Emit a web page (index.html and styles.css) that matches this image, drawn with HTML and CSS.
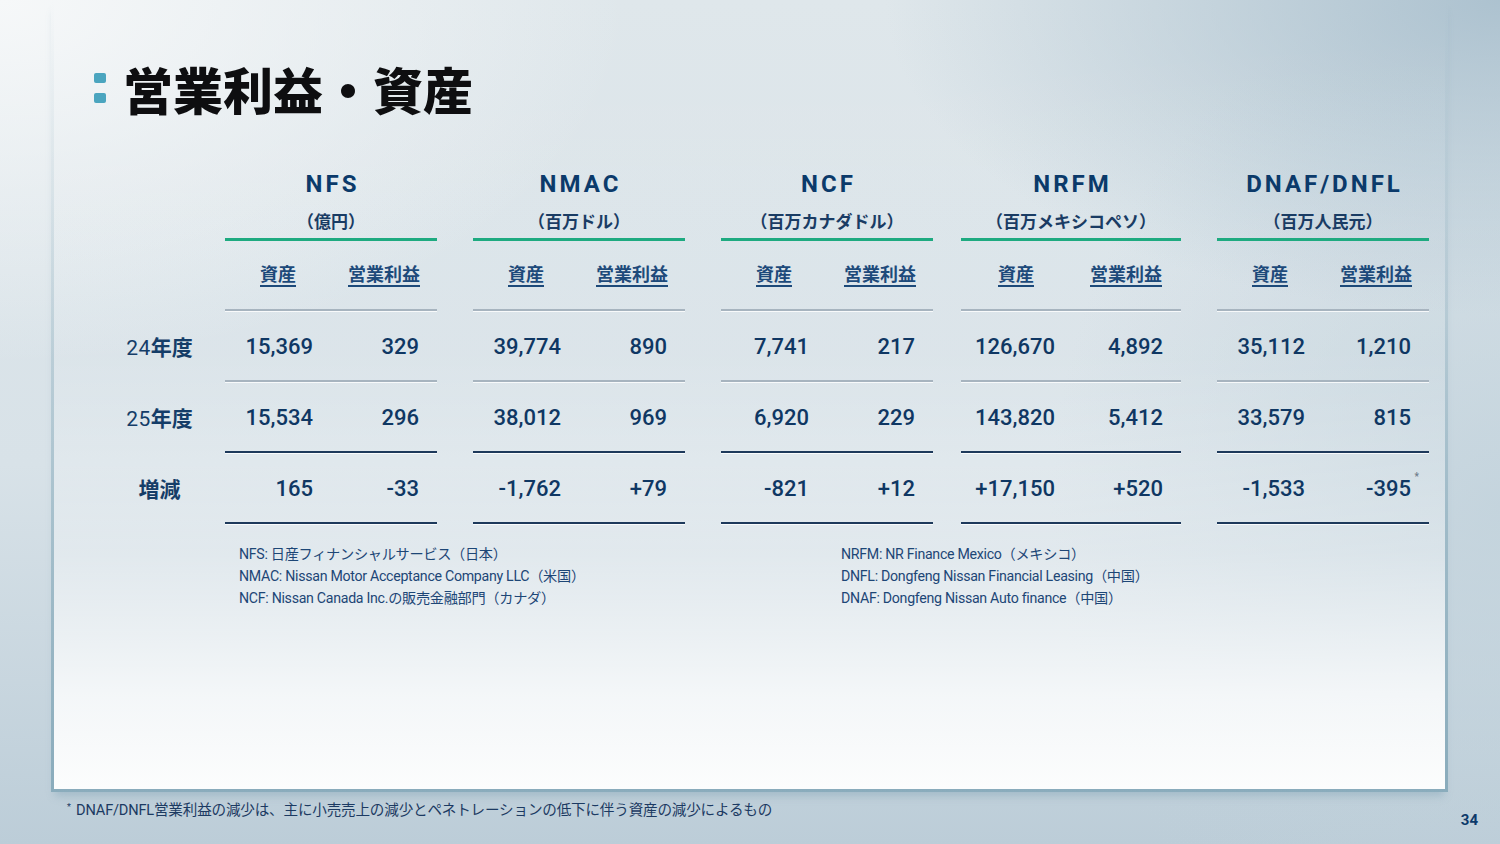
FILE: index.html
```html
<!DOCTYPE html>
<html lang="ja">
<head>
<meta charset="utf-8">
<title>営業利益・資産</title>
<link rel="stylesheet" href="styles.css">
</head>
<body>
<div class="slide">
  <div class="panel">
    <header class="title-row">
      <div class="bullets"><span></span><span></span></div>
      <h1>営業利益・資産</h1>
    </header>

    <div class="table">
      <div class="labels">
        <div class="c-name"></div>
        <div class="c-unit"></div>
        <div class="c-sub"></div>
        <div class="c-row light"><span class="lbl"><span class="d">24</span>年度</span></div>
        <div class="c-row dark"><span class="lbl"><span class="d">25</span>年度</span></div>
        <div class="c-row dark"><span class="lbl bold">増減</span></div>
      </div>

      <div class="group">
        <div class="c-name">NFS</div>
        <div class="c-unit">（億円）</div>
        <div class="c-sub"><span>資産</span><span>営業利益</span></div>
        <div class="c-row light"><span>15,369</span><span>329</span></div>
        <div class="c-row dark"><span>15,534</span><span>296</span></div>
        <div class="c-row dark"><span>165</span><span>-33</span></div>
      </div>

      <div class="group">
        <div class="c-name">NMAC</div>
        <div class="c-unit">（百万ドル）</div>
        <div class="c-sub"><span>資産</span><span>営業利益</span></div>
        <div class="c-row light"><span>39,774</span><span>890</span></div>
        <div class="c-row dark"><span>38,012</span><span>969</span></div>
        <div class="c-row dark"><span>-1,762</span><span>+79</span></div>
      </div>

      <div class="group">
        <div class="c-name">NCF</div>
        <div class="c-unit">（百万カナダドル）</div>
        <div class="c-sub"><span>資産</span><span>営業利益</span></div>
        <div class="c-row light"><span>7,741</span><span>217</span></div>
        <div class="c-row dark"><span>6,920</span><span>229</span></div>
        <div class="c-row dark"><span>-821</span><span>+12</span></div>
      </div>

      <div class="group wide">
        <div class="c-name">NRFM</div>
        <div class="c-unit">（百万メキシコペソ）</div>
        <div class="c-sub"><span>資産</span><span>営業利益</span></div>
        <div class="c-row light"><span>126,670</span><span>4,892</span></div>
        <div class="c-row dark"><span>143,820</span><span>5,412</span></div>
        <div class="c-row dark"><span>+17,150</span><span>+520</span></div>
      </div>

      <div class="group">
        <div class="c-name">DNAF/DNFL</div>
        <div class="c-unit">（百万人民元）</div>
        <div class="c-sub"><span>資産</span><span>営業利益</span></div>
        <div class="c-row light"><span>35,112</span><span>1,210</span></div>
        <div class="c-row dark"><span>33,579</span><span>815</span></div>
        <div class="c-row dark"><span>-1,533</span><span><span class="mark">-395<i class="ast">*</i></span></span></div>
      </div>
    </div>

    <div class="notes">
      <ul class="note-col">
        <li>NFS: 日産フィナンシャルサービス（日本）</li>
        <li>NMAC: Nissan Motor Acceptance Company LLC（米国）</li>
        <li>NCF: Nissan Canada Inc.の販売金融部門（カナダ）</li>
      </ul>
      <ul class="note-col">
        <li>NRFM: NR Finance Mexico（メキシコ）</li>
        <li>DNFL: Dongfeng Nissan Financial Leasing（中国）</li>
        <li>DNAF: Dongfeng Nissan Auto finance（中国）</li>
      </ul>
    </div>
  </div>

  <footer class="footer">
    <p class="foot-note"><span class="star">*</span> DNAF/DNFL営業利益の減少は、主に小売売上の減少とペネトレーションの低下に伴う資産の減少によるもの</p>
    <span class="page">34</span>
  </footer>
</div>
</body>
</html>
```

FILE: styles.css
```css
* { box-sizing: border-box; }

html, body {
  margin: 0;
  padding: 0;
}

body {
  width: 1500px;
  height: 844px;
  overflow: hidden;
  font-family: "Roboto", "Noto Sans CJK JP", sans-serif;
  color: #123a64;
  background:
    radial-gradient(ellipse 900px 520px at 0% 0%, rgba(246,248,249,1), rgba(246,248,249,0) 70%),
    radial-gradient(ellipse 820px 420px at 100% 0%, rgba(170,192,206,0.95), rgba(170,192,206,0) 75%),
    radial-gradient(ellipse 600px 700px at 100% 60%, rgba(192,209,219,0.8), rgba(192,209,219,0) 75%),
    linear-gradient(180deg, #dfe7eb 0%, #d8e2e8 55%, #bccdd8 100%);
}

.slide {
  width: 1500px;
  height: 844px;
  display: flex;
  flex-direction: column;
}

/* Main panel */
.panel {
  height: 792px;
  margin: 0 52px 0 51px;
  padding: 58px 0 0 40px;
  border-style: solid;
  border-width: 0 3px 3px 3px;
  border-image: linear-gradient(180deg,
    rgba(120,160,178,0) 0%,
    rgba(120,160,178,0.15) 25%,
    rgba(120,160,178,0.45) 60%,
    rgba(120,160,178,0.75) 100%) 1;
  background: linear-gradient(180deg,
    rgba(255,255,255,0) 0%,
    rgba(255,255,255,0.05) 45%,
    rgba(255,255,255,0.35) 70%,
    rgba(255,255,255,0.8) 88%,
    #fcfdfd 100%) padding-box;
  box-shadow: 0 8px 8px -4px rgba(110,150,170,0.35);
}

/* Title */
.title-row {
  display: flex;
  align-items: center;
  height: 60px;
  gap: 17px;
}

.bullets {
  display: flex;
  flex-direction: column;
  gap: 10px;
}

.bullets span {
  display: block;
  width: 12px;
  height: 10px;
  border-radius: 2px;
  background: #4ba5bf;
}

h1 {
  margin: 0;
  font-family: "Noto Sans CJK JP", sans-serif;
  font-weight: 900;
  font-size: 50px;
  line-height: 60px;
  color: #0e0e10;
}

/* Table */
.table {
  display: flex;
  gap: 36px;
  margin-top: 48px;
}

.labels {
  width: 131px;
  margin-right: -36px;
}

.group {
  width: 212px;
  flex: none;
}

.group.wide {
  width: 220px;
  margin-left: -8px;
}

.c-name {
  height: 36px;
  line-height: 36px;
  text-align: center;
  font-size: 24px;
  font-weight: 700;
  letter-spacing: 3px;
  padding-left: 3px;
  color: #0b3a6a;
}

.c-unit {
  height: 39px;
  padding-top: 1px;
  line-height: 36px;
  text-align: center;
  font-size: 17px;
  font-weight: 700;
  color: #1a3c64;
  border-bottom: 3px solid #1eaa80;
  font-family: "Noto Sans CJK JP", sans-serif;
}

.labels .c-unit,
.labels .c-sub,
.labels .c-row {
  border-bottom-color: transparent !important;
  box-shadow: none !important;
}

.c-sub {
  height: 70px;
  display: flex;
  align-items: center;
  padding-bottom: 5px;
  border-bottom: 2px solid #a7b4bf;
  box-shadow: 0 1px 0 rgba(255,255,255,0.8);
}

.c-sub span {
  flex: 1;
  text-align: center;
  font-family: "Noto Sans CJK JP", sans-serif;
  font-weight: 700;
  font-size: 18px;
  color: #1d4a7a;
  text-decoration: underline;
  text-decoration-thickness: 2px;
  text-underline-offset: 4px;
}

.c-row {
  height: 71px;
  display: flex;
  align-items: center;
  border-bottom: 2px solid #a7b4bf;
  box-shadow: 0 1px 0 rgba(255,255,255,0.8);
}

.c-row.dark {
  border-bottom-color: #1d395b;
}

.group .c-row > span {
  flex: 1;
  text-align: right;
  padding-right: 18px;
  padding-top: 2px;
  font-size: 22px;
  font-weight: 500;
  color: #0f3763;
}

.group.wide .c-row > span:first-child {
  padding-right: 14px;
}

.mark {
  position: relative;
}

.ast {
  position: absolute;
  right: -8px;
  top: -5px;
  font-style: normal;
  font-size: 10px;
  color: #6c7a88;
}

.labels .c-row {
  justify-content: center;
}

.lbl {
  font-family: "Noto Sans CJK JP", sans-serif;
  font-size: 21px;
  font-weight: 700;
  color: #153d68;
}

.lbl .d {
  font-family: "Roboto", sans-serif;
  font-weight: 400;
  letter-spacing: 0.5px;
}

/* Notes */
.notes {
  display: grid;
  grid-template-columns: 602px auto;
  padding-left: 145px;
  margin-top: 19px;
}

.note-col {
  list-style: none;
  margin: 0;
  padding: 0;
}

.note-col li {
  font-size: 14.2px;
  line-height: 22px;
  color: #1d4676;
  letter-spacing: -0.3px;
}

/* Footer */
.footer {
  flex: 1;
  display: flex;
  justify-content: space-between;
  padding: 0 22px 0 67px;
}

.foot-note {
  margin: 7px 0 0;
  font-size: 14.6px;
  line-height: 16px;
  color: #1c3a62;
  letter-spacing: -0.2px;
}

.star {
  font-size: 9px;
  vertical-align: 5px;
  margin-right: 2px;
}

.page {
  margin-top: 20px;
  font-size: 15px;
  font-weight: 700;
  color: #0d3a6a;
  line-height: 16px;
}
```
